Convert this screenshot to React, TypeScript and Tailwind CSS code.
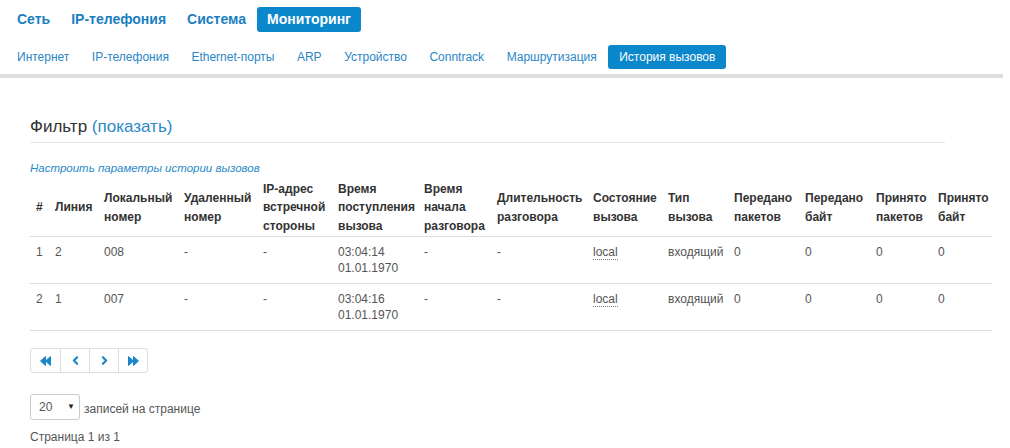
import { ChevronLeft, ChevronRight } from "lucide-react";

const topMenu = ["Сеть", "IP-телефония", "Система", "Мониторинг"];
const subMenu = [
  "Интернет",
  "IP-телефония",
  "Ethernet-порты",
  "ARP",
  "Устройство",
  "Conntrack",
  "Маршрутизация",
  "История вызовов",
];

const columns: { title: string[]; w: string }[] = [
  { title: ["#"], w: "w-[19px]" },
  { title: ["Линия"], w: "w-[49px]" },
  { title: ["Локальный", "номер"], w: "w-[80px]" },
  { title: ["Удаленный", "номер"], w: "w-[79px]" },
  { title: ["IP-адрес", "встречной", "стороны"], w: "w-[75px]" },
  { title: ["Время", "поступления", "вызова"], w: "w-[86px]" },
  { title: ["Время", "начала", "разговора"], w: "w-[73px]" },
  { title: ["Длительность", "разговора"], w: "w-[96px]" },
  { title: ["Состояние", "вызова"], w: "w-[75px]" },
  { title: ["Тип", "вызова"], w: "w-[66px]" },
  { title: ["Передано", "пакетов"], w: "w-[71px]" },
  { title: ["Передано", "байт"], w: "w-[71px]" },
  { title: ["Принято", "пакетов"], w: "w-[62px]" },
  { title: ["Принято", "байт"], w: "w-[60px]" },
];

const calls = [
  { n: "1", line: "2", local: "008", time: "03:04:14", date: "01.01.1970" },
  { n: "2", line: "1", local: "007", time: "03:04:16", date: "01.01.1970" },
];

// two filled triangles, like the "first / last page" glyphs
function DoubleArrow({ dir }: { dir: "left" | "right" }) {
  return (
    <svg width="11" height="10" viewBox="0 0 11 10" className={dir === "right" ? "" : "rotate-180"}>
      <path d="M0.5 0.5 L5.5 5 L0.5 9.5 Z M5.5 0.5 L10.5 5 L5.5 9.5 Z" fill="currentColor" stroke="currentColor" strokeLinejoin="round" />
    </svg>
  );
}

function Pager() {
  const btn = "w-[29px] h-[23px] flex items-center justify-center text-[#1a86c8] border-l border-[#ddd] first:border-l-0";
  return (
    <div className="flex w-fit border border-[#ddd] rounded-[3px] bg-white">
      <div className={btn}><DoubleArrow dir="left" /></div>
      <div className={btn}><ChevronLeft size={13} strokeWidth={4} /></div>
      <div className={btn}><ChevronRight size={13} strokeWidth={4} /></div>
      <div className={btn}><DoubleArrow dir="right" /></div>
    </div>
  );
}

export default function App() {
  const td = "px-[6px] pt-[7px] pb-[7px]";
  return (
    <div className="w-[1010px] h-[448px] bg-white overflow-hidden font-['Liberation_Sans',Arial,sans-serif] text-[#555]">
      {/* main sections */}
      <nav className="flex items-center gap-[1px] pl-[7px] pt-[7px] h-[32px]">
        {topMenu.map((item) => (
          <div
            key={item}
            className={`px-[10px] h-[25px] flex items-center rounded-[3px] text-[14px] font-bold ${
              item === "Мониторинг" ? "bg-[#0b87cb] text-white" : "text-[#1a7fc1]"
            }`}
          >
            {item}
          </div>
        ))}
      </nav>

      {/* monitoring sub-pages */}
      <nav className="flex items-center gap-[0.5px] pl-[6px] mt-[13px] h-[24px]">
        {subMenu.map((item) => (
          <div
            key={item}
            className={`px-[11px] h-[24px] flex items-center rounded-[3px] text-[12px] ${
              item === "История вызовов" ? "bg-[#0b87cb] text-white" : "text-[#2a86c6]"
            }`}
          >
            {item}
          </div>
        ))}
      </nav>
      <div className="mt-[5px] h-[4px] w-[1003px] bg-[#dddddd]" />

      <div className="px-[30px]">
        <div className="mt-[36px] w-[915px] border-b border-[#e6e6e6] pb-[2px] text-[17px] text-[#333]">
          Фильтр <span className="text-[#2a8ac8]">(показать)</span>
        </div>

        <div className="mt-[17px] text-[11.5px] italic text-[#2a8ac8]">
          Настроить параметры истории вызовов
        </div>

        <table className="mt-[1px] w-[962px] table-fixed border-collapse text-[12px]">
          <colgroup>
            {columns.map((c, i) => (
              <col key={i} className={c.w} />
            ))}
          </colgroup>
          <thead>
            <tr className="border-b border-[#ddd]">
              {columns.map((c, i) => (
                <th
                  key={i}
                  className="px-[6px] pt-[2px] pb-[1px] align-middle text-left font-bold text-[#333]"
                >
                  {c.title.map((t) => (
                    <div key={t} className="whitespace-nowrap leading-[18.5px]">{t}</div>
                  ))}
                </th>
              ))}
            </tr>
          </thead>
          <tbody>
            {calls.map((r) => (
              <tr key={r.n} className="border-b border-[#ddd] align-top leading-[16px]">
                <td className={td}>{r.n}</td>
                <td className={td}>{r.line}</td>
                <td className={td}>{r.local}</td>
                <td className={td}>-</td>
                <td className={td}>-</td>
                <td className={td}>
                  <div>{r.time}</div>
                  <div>{r.date}</div>
                </td>
                <td className={td}>-</td>
                <td className={td}>-</td>
                <td className={td}>
                  <span className="border-b border-dotted border-[#777]">local</span>
                </td>
                <td className={td}>входящий</td>
                <td className={td}>0</td>
                <td className={td}>0</td>
                <td className={td}>0</td>
                <td className={td}>0</td>
              </tr>
            ))}
          </tbody>
        </table>

        <div className="mt-[17px]">
          <Pager />
        </div>

        <div className="mt-[21px] flex items-center gap-[4px] text-[12px]">
          <div className="w-[50px] h-[26px] border border-[#ccc] rounded-[3px] flex items-center justify-between pl-[8px] pr-[4px] text-[12px] text-[#555]">
            <span>20</span>
            <span className="text-[8px] text-[#222]">▼</span>
          </div>
          <span className="mt-[4px]">записей на странице</span>
        </div>

        <div className="mt-[8px] text-[12px]">Страница 1 из 1</div>
      </div>
    </div>
  );
}
